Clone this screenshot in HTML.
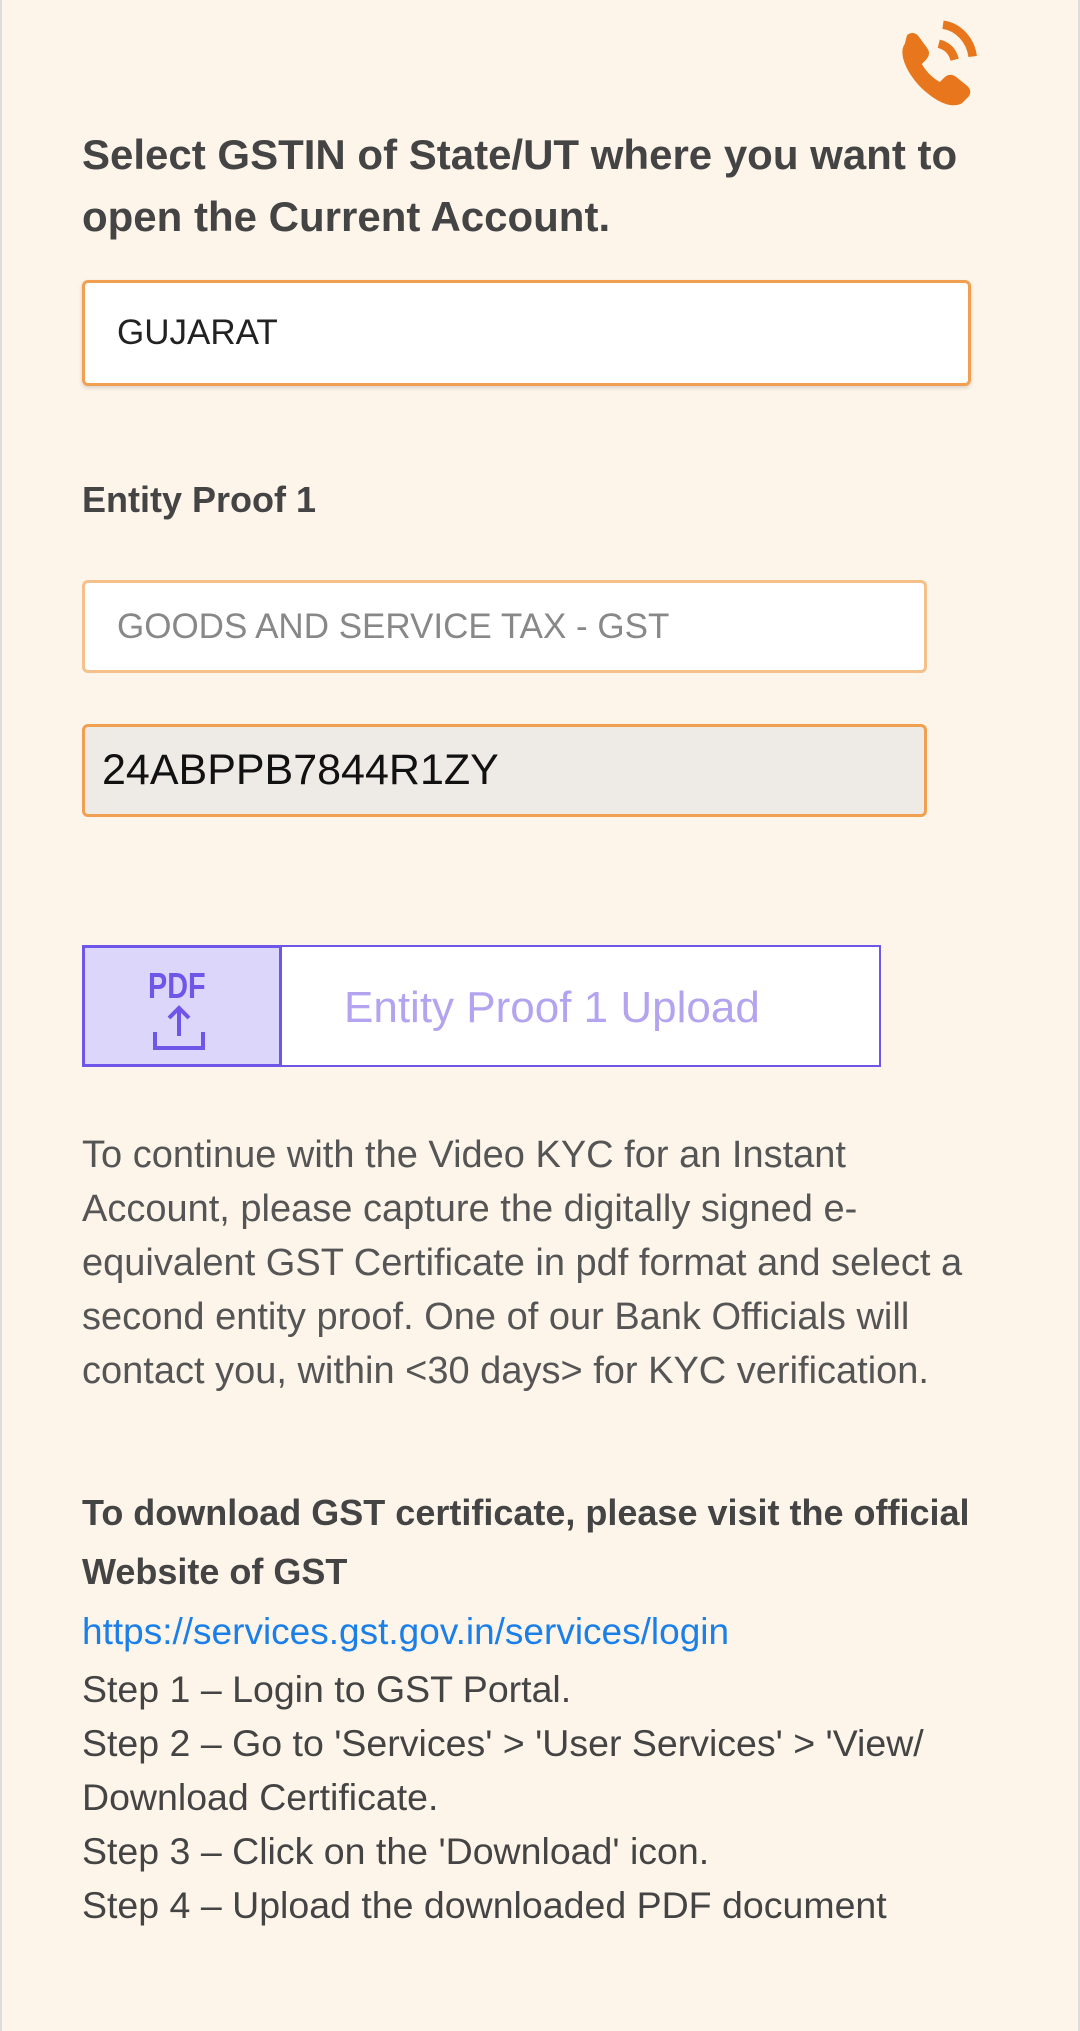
<!DOCTYPE html>
<html><head><meta charset="utf-8"><style>
body{margin:0;width:1080px;height:2031px;background:#fef5ea;font-family:"Liberation Sans",sans-serif;position:relative;overflow:hidden;border-left:2px solid #ddd;border-right:2px solid #ddd;box-sizing:border-box}
.a{position:absolute}
h1{position:absolute;left:80px;top:124px;margin:0;font-size:42px;line-height:62px;color:#444;font-weight:bold;width:940px}
.inp{position:absolute;left:80px;box-sizing:border-box;border:3px solid #f0a050;border-radius:6px;background:#fff;display:flex;align-items:center}
p{margin:0}
</style></head><body>
<svg class="a" style="left:888px;top:12px" width="106" height="106" viewBox="0 0 100 100">
<path d="M14 30 C8 38 14 55 28 70 C42 84 58 92 68 86 L74 80 C77 76 76 72 72 69 L62 61 C58 58 54 59 51 62 L47 66 C40 62 34 56 30 49 L34 45 C37 42 38 38 35 34 L27 23 C24 19 19 19 16 22 Z" fill="#e8761c"/>
<path d="M46 30 C54 32 59 37 61 45" stroke="#e8761c" stroke-width="8" fill="none"/>
<path d="M50 12 C64 14 76 26 78 42" stroke="#e8761c" stroke-width="8" fill="none"/>
</svg>
<h1>Select GSTIN of State/UT where you want to open the Current Account.</h1>
<div class="inp" style="top:280px;width:889px;height:106px;padding-left:32px;font-size:35px;color:#222;box-shadow:0 2px 4px rgba(0,0,0,.15)">GUJARAT</div>
<div class="a" style="left:80px;top:479px;font-size:36px;font-weight:bold;color:#444">Entity Proof 1</div>
<div class="inp" style="top:580px;width:845px;height:93px;padding-left:32px;font-size:35px;color:#888;border-color:#f5c08a">GOODS AND SERVICE TAX - GST</div>
<div class="inp" style="top:724px;width:845px;height:93px;padding-left:17px;font-size:43px;color:#111;background:#eeeae6;border-color:#f0a050">24ABPPB7844R1ZY</div>
<div class="a" style="left:80px;top:945px;width:799px;height:122px;box-sizing:border-box;border:2px solid #6f55e8;background:#fff"></div>
<div class="a" style="left:80px;top:945px;width:200px;height:122px;box-sizing:border-box;border:3px solid #6f55e8;background:#dcd6fb">
<div class="a" style="left:63px;top:17px;font-size:36px;font-weight:bold;color:#6f55e8;transform:scaleX(.8);transform-origin:left">PDF</div>
<svg class="a" style="left:66px;top:56px" width="60" height="50" viewBox="0 0 60 50"><path d="M28 4 V32 M18 14 L28 4 L38 14" stroke="#6f55e8" stroke-width="4" fill="none"/><path d="M4 28 V44 H52 V28" stroke="#6f55e8" stroke-width="4" fill="none"/></svg>
</div>
<div class="a" style="left:342px;top:983px;font-size:44px;color:#b4a4f0">Entity Proof 1 Upload</div>
<p class="a" style="left:80px;top:1128px;width:900px;font-size:38px;line-height:54px;color:#555">To continue with the Video KYC for an Instant Account, please capture the digitally signed e-equivalent GST Certificate in pdf format and select a second entity proof. One of our Bank Officials will contact you, within &lt;30 days&gt; for KYC verification.</p>
<p class="a" style="left:80px;top:1483px;width:920px;font-size:36px;line-height:59px;color:#444;font-weight:bold">To download GST certificate, please visit the official Website of GST</p>
<div class="a" style="left:80px;top:1605px;font-size:37px;line-height:54px;color:#1a7fe8">https://services.gst.gov.in/services/login</div>
<p class="a" style="left:80px;top:1662px;width:880px;font-size:37.5px;line-height:54px;color:#444">Step 1 – Login to GST Portal.<br>Step 2 – Go to 'Services' &gt; 'User Services' &gt; 'View/ Download Certificate.<br>Step 3 – Click on the 'Download' icon.<br>Step 4 – Upload the downloaded PDF document</p>
</body></html>
